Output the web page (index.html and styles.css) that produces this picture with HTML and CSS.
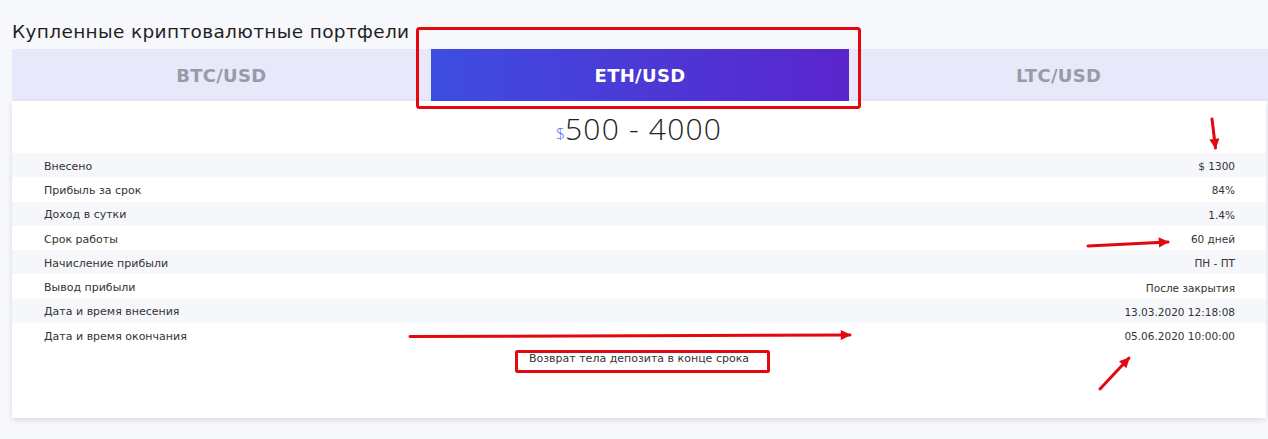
FILE: index.html
```html
<!DOCTYPE html>
<html lang="ru">
<head>
    <meta charset="UTF-8">
    <meta name="viewport" content="width=device-width, initial-scale=1.0">
    <title>Портфели</title>
    <link rel="stylesheet" href="styles.css">
</head>
<body>
    <div class="page">
        <h2 class="title">Купленные криптовалютные портфели</h2>

        <div class="tabs">
            <button class="tab">BTC/USD</button>
            <button class="tab active">ETH/USD</button>
            <button class="tab">LTC/USD</button>
        </div>

        <div class="card">
            <div class="price"><span class="cur">$</span>500 - 4000</div>

            <div class="rows">
                <div class="row"><span>Внесено</span><span class="val">$ 1300</span></div>
                <div class="row"><span>Прибыль за срок</span><span class="val">84%</span></div>
                <div class="row"><span>Доход в сутки</span><span class="val">1.4%</span></div>
                <div class="row"><span>Срок работы</span><span class="val">60 дней</span></div>
                <div class="row"><span>Начисление прибыли</span><span class="val">ПН - ПТ</span></div>
                <div class="row"><span>Вывод прибыли</span><span class="val">После закрытия</span></div>
                <div class="row"><span>Дата и время внесения</span><span class="val">13.03.2020 12:18:08</span></div>
                <div class="row"><span>Дата и время окончания</span><span class="val">05.06.2020 10:00:00</span></div>
            </div>

            <p class="note">Возврат тела депозита в конце срока</p>
        </div>

        <!-- пометки поверх скриншота -->
        <svg class="marks" width="1268" height="439" viewBox="0 0 1268 439">
            <defs>
                <marker id="head" viewBox="0 0 10 10" refX="9" refY="5" markerWidth="4" markerHeight="3.4" orient="auto">
                    <path d="M0 0 L10 5 L0 10 Z" fill="#e3080f"/>
                </marker>
            </defs>
            <rect x="417.5" y="28.5" width="442" height="79" rx="2" fill="none" stroke="#e3080f" stroke-width="3"/>
            <rect x="516.5" y="351.5" width="252" height="20" rx="1" fill="none" stroke="#e3080f" stroke-width="3"/>
            <line x1="1212" y1="119" x2="1215.5" y2="148" stroke="#e3080f" stroke-width="3" stroke-linecap="round" marker-end="url(#head)"/>
            <line x1="1088" y1="246" x2="1168" y2="242" stroke="#e3080f" stroke-width="3" stroke-linecap="round" marker-end="url(#head)"/>
            <line x1="410" y1="336.5" x2="850" y2="335" stroke="#e3080f" stroke-width="3" stroke-linecap="round" marker-end="url(#head)"/>
            <line x1="1100" y1="389" x2="1129" y2="358" stroke="#e3080f" stroke-width="3" stroke-linecap="round" marker-end="url(#head)"/>
        </svg>
    </div>
</body>
</html>
```

FILE: styles.css
```css
* {
    box-sizing: border-box;
}

body {
    margin: 0;
    font-family: "DejaVu Sans", "Open Sans", sans-serif;
    background-color: #f7f8fc;
    color: #2b2b2b;
}

.page {
    position: relative;
    height: 439px;
    padding: 18px 0 0 12px;
}

.title {
    margin: 0 0 4px;
    font-size: 18.5px;
    font-weight: 400;
    line-height: 27px;
    letter-spacing: 0.35px;
    color: #1f1f1f;
}

.tabs {
    display: grid;
    grid-template-columns: 1fr 1fr 1fr;
    height: 52px;
    background: #e8e8fb;
}

.tab {
    border: none;
    background: transparent;
    font-family: inherit;
    font-size: 18px;
    font-weight: 700;
    letter-spacing: 0.3px;
    color: #9a9aa6;
    cursor: pointer;
}

.tab.active {
    background: linear-gradient(to right, #3d4de0, #5a25cc);
    color: #fff;
}

.card {
    margin-right: 2px;
    height: 317px;
    background: #fff;
    box-shadow: 0 2px 6px rgba(0, 0, 0, 0.12);
}

.price {
    height: 52px;
    text-align: center;
    font-family: "Open Sans", sans-serif;
    font-size: 30px;
    font-weight: 300;
    line-height: 56px;
    letter-spacing: 1.2px;
    color: #222;
}

.cur {
    font-size: 16px;
    letter-spacing: 0;
    color: #4a6fe0;
}

.row {
    display: flex;
    justify-content: space-between;
    align-items: center;
    height: 24.3px;
    padding: 2px 31px 0 32px;
    font-size: 11px;
    color: #333;
}

.row .val {
    font-size: 10.5px;
}

.row:nth-child(odd) {
    background: #f6f7fb;
}

.note {
    margin: 2px 0 0;
    text-align: center;
    font-size: 11px;
    line-height: 20px;
    color: #333;
}

.marks {
    position: absolute;
    top: 0;
    left: 0;
    pointer-events: none;
}
```
